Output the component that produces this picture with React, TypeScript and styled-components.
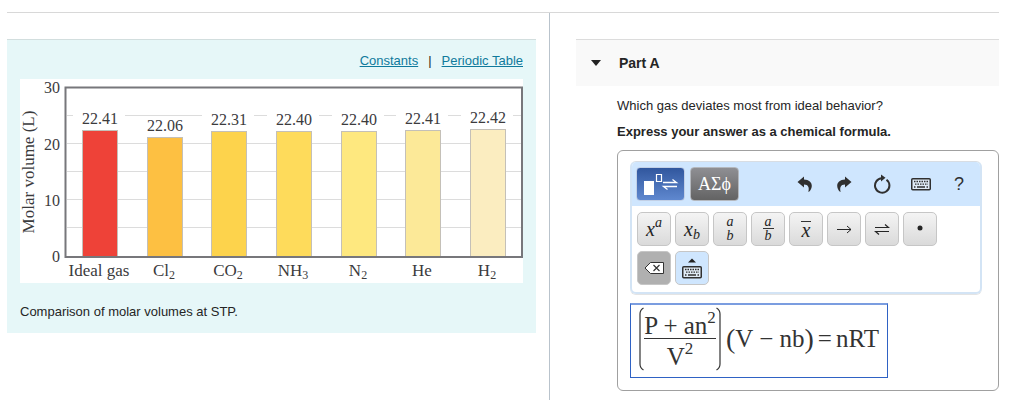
import React from "react";
import styled, { createGlobalStyle, css } from "styled-components";

const serif = `"Liberation Serif", "Times New Roman", serif`;

const GlobalStyle = createGlobalStyle`
  *, *::before, *::after { box-sizing: border-box; }
  body {
    margin: 0;
    background: #fff;
    color: #252525;
    font: 13px/18px "Liberation Sans", Arial, sans-serif;
  }
  p, h2 { margin: 0; }
  button { font: inherit; color: inherit; padding: 0; cursor: pointer; }
  svg { display: block; }
`;

const Page = styled.div`
  min-height: 100vh;
  padding: 12px 25px 0 7px;
  display: flex;
`;

const Columns = styled.main`
  flex: 1;
  border-top: 1px solid #d8d8d8;
  display: grid;
  grid-template-columns: 543fr 449fr;
`;

const ReferenceColumn = styled.section`
  border-right: 1px solid #b9c3cc;
  padding: 26px 13px 0 0;
`;

const QuestionColumn = styled.section`
  padding: 26px 0 8px 26px;
`;

const ReferencePanel = styled.div`
  border-top: 1px solid #d2dede;
  background: #e6f7f8;
  padding: 12px 13px;
`;

const ReferenceLinks = styled.nav`
  display: flex;
  justify-content: flex-end;
  gap: 10px;
  margin-bottom: 9px;
`;

const ReferenceLink = styled.a`
  color: #0f7a9c;
  text-decoration: underline;
`;

const Chart = styled.svg`
  width: 100%;
  height: auto;
  background: #fff;
  font-family: ${serif};
  fill: #3b3b3d;
`;

const Caption = styled.p`
  margin-top: 20px;
`;

const PartHeader = styled.button`
  display: flex;
  align-items: center;
  gap: 18px;
  width: 100%;
  height: 47px;
  padding: 0 15px;
  border: 0;
  border-top: 1px solid #dcdcdc;
  background: #f9f9f9;
  font-size: 14px;
  font-weight: bold;
`;

const PartBody = styled.div`
  padding: 11px 0 0 41px;
`;

const Instruction = styled.p`
  margin: 8px 0 9px;
  font-weight: bold;
`;

const AnswerBox = styled.div`
  border: 1px solid #a0a0a0;
  border-radius: 6px;
  padding: 10px 16px 12px 12px;
`;

const Editor = styled.div`
  border: 2px solid #d3e4f5;
  border-top: 1px solid #d8dde3;
  border-radius: 6px;
  overflow: hidden;
  box-shadow: 0 1px 0 #e4e4e4;
`;

const EditorTop = styled.div`
  display: flex;
  align-items: center;
  justify-content: space-between;
  height: 44px;
  padding: 0 6px 0 4px;
  background: #cfe6fe;
`;

const Tabs = styled.div`
  display: flex;
  gap: 5px;
`;

const Tab = styled.button<{ $active?: boolean }>`
  display: flex;
  align-items: center;
  justify-content: center;
  width: 49px;
  height: 34px;
  border: 1px solid ${(p) => (p.$active ? "#c2d0e6" : "#b4b8be")};
  border-radius: 4px;
  background: ${(p) =>
    p.$active ? "linear-gradient(#31579e, #5f88cf)" : "linear-gradient(#8f8f93, #636363)"};
  && { color: #fff; font: 18px/24px ${serif}; }
`;

const Tools = styled.div`
  display: flex;
  justify-content: space-between;
  width: 184px;
`;

const Tool = styled.button`
  display: flex;
  align-items: center;
  justify-content: center;
  width: 30px;
  height: 32px;
  border: 0;
  background: none;
  && { color: #303030; font-size: 18px; }
`;

const Keys = styled.div`
  display: flex;
  flex-wrap: wrap;
  gap: 5px 4px;
  padding: 6px 36px 7px 5px;
`;

const Key = styled.button<{ $tone?: "dark" | "blue" }>`
  display: flex;
  align-items: center;
  justify-content: center;
  width: 34px;
  height: 34px;
  border: 1px solid #c6c6c6;
  border-radius: 5px;
  background: linear-gradient(#f4f4f4, #dadada);
  ${(p) => p.$tone === "dark" && css`background: #b0b0b0;`}
  ${(p) => p.$tone === "blue" && css`background: #cfe6fe;`}
  && { font: italic 20px/20px ${serif}; }
`;

const Small = styled.span<{ $place: "up" | "down" }>`
  font-size: 14px;
  line-height: 14px;
  align-self: ${(p) => (p.$place === "up" ? "flex-start" : "flex-end")};
  padding: ${(p) => (p.$place === "up" ? "3px 0 0" : "0 0 3px")};
`;

const Stack = styled.span<{ $bar?: boolean }>`
  display: flex;
  flex-direction: column;
  align-items: center;
  width: 11px;
  font-size: 14px;
  line-height: 14px;
  span:first-child {
    width: 100%;
    line-height: 12px;
    border-bottom: 1px solid ${(p) => (p.$bar ? "#333" : "transparent")};
  }
`;

const Overlined = styled.span`
  border-top: 1px solid #333;
  line-height: 16px;
  padding: 0 1px;
`;

const MathField = styled.div`
  display: inline-flex;
  align-items: flex-start;
  margin-top: 9px;
  height: 75px;
  padding: 2px 8px 0 8px;
  border: 1px solid #2f62c4;
  border-top: 2px solid #7b9de0;
  color: #333;
  font: 25px/30px ${serif};
  white-space: nowrap;
  vertical-align: top;
`;

const Fraction = styled.span`
  display: flex;
  flex-direction: column;
  width: 72px;
  text-align: center;
`;

const Numerator = styled.span`
  height: 32px;
  padding-top: 4px;
  border-bottom: 1px solid #333;
`;

const Denominator = styled.span`
  padding: 3px 0 0;
`;

const Power = styled.sup`
  font-size: 17px;
  line-height: 0;
  vertical-align: 11px;
`;

const Expression = styled.span`
  display: flex;
  align-items: center;
  gap: 4px;
  height: 34px;
  margin: 15px 0 0 5px;
`;

const Group = styled.span`
  display: flex;
  align-items: center;
`;

const Paren = styled.span`
  font-size: 28px;
  line-height: 26px;
`;

const bars = [
  { value: "22.41", name: "Ideal gas", sub: "", x: 62, top: 51, fill: "#ee4238" },
  { value: "22.06", name: "Cl", sub: "2", x: 127, top: 58, fill: "#fdc042" },
  { value: "22.31", name: "CO", sub: "2", x: 191, top: 52, fill: "#fdd34c" },
  { value: "22.40", name: "NH", sub: "3", x: 256, top: 52, fill: "#fedb5b" },
  { value: "22.40", name: "N", sub: "2", x: 321, top: 52, fill: "#fee87f" },
  { value: "22.41", name: "He", sub: "", x: 385, top: 51, fill: "#fce998" },
  { value: "22.42", name: "H", sub: "2", x: 450, top: 50, fill: "#fbedc0" },
];

const gridLines = [37, 65, 93, 121, 149];
const ticks = [
  { label: "30", y: 14 },
  { label: "20", y: 71 },
  { label: "10", y: 127 },
  { label: "0", y: 183 },
];

function VolumeChart() {
  return (
    <Chart viewBox="0 0 503 204" role="img" aria-label="Bar chart of molar volumes">
      {gridLines.map((y) => (
        <path key={y} d={`M47 ${y - 0.5}H502`} stroke="#dcdcdc" />
      ))}
      {bars.map((b) => (
        <g key={b.name}>
          {b.top < 55 && <rect x={b.x - 9} y="30" width="52" height="15" fill="#fff" />}
          <rect x={b.x + 0.5} y={b.top + 0.5} width="35" height={177 - b.top} fill={b.fill} stroke="#c4c0b8" />
          <text x={b.x + 18} y={b.top - 6} fontSize="16" textAnchor="middle">
            {b.value}
          </text>
          <text x={b.x + 17} y="197" fontSize="17" textAnchor="middle">
            {b.name}
            {b.sub && (
              <tspan fontSize="12" dy="3">
                {b.sub}
              </tspan>
            )}
          </text>
        </g>
      ))}
      <path d="M45.5 8.5H502V178H45.5Z" fill="none" stroke="#77777b" strokeWidth="2" />
      {ticks.map((t) => (
        <text key={t.label} x="40" y={t.y} fontSize="16" textAnchor="end">
          {t.label}
        </text>
      ))}
      <text transform="translate(14 93) rotate(-90)" fontSize="17" textAnchor="middle">
        Molar volume (L)
      </text>
    </Chart>
  );
}

function Harpoons() {
  return (
    <svg width="16" height="12" viewBox="0 0 16 12" fill="none" stroke="currentColor" strokeWidth="1.2">
      <path d="M1 4.5H14.5L11 1.5M15 8.5H1.5L5 11.5" />
    </svg>
  );
}

function TemplatesIcon() {
  return (
    <svg width="36" height="24" viewBox="0 0 36 24" fill="none" stroke="#fff">
      <path d="M1 9H11V23H1Z" fill="#fff" stroke="none" />
      <path d="M13.5 2.5H18.5V9.5H13.5Z" strokeWidth="1.2" />
      <path d="M20 10.5H33.500L29.5 7.500M34 14.500H20.500L24.5 17.500" strokeWidth="1.3" />
    </svg>
  );
}

function CurvedArrow({ flip }: { flip?: boolean }) {
  return (
    <svg width="16" height="16" viewBox="0 0 16 16" fill="currentColor">
      <path
        transform={flip ? "translate(16 0) scale(-1 1)" : undefined}
        d="M0.500 6L7 0.500V3.500C12 3.500 15 6.500 14.800 10C14.700 12.500 13.500 14.500 12 15.800H11.300C12.500 12 11.500 8.500 7 8.500V11.500Z"
      />
    </svg>
  );
}

function ResetIcon() {
  return (
    <svg width="18" height="20" viewBox="0 0 18 20" fill="none" stroke="currentColor">
      <path d="M13.500 5.700A7.200 7.200 0 1 1 9 4.300" strokeWidth="2" />
      <path d="M8 0.500L12.500 3.800L8 7.500Z" fill="currentColor" stroke="none" />
    </svg>
  );
}

function KeyboardIcon() {
  return (
    <svg width="20" height="14" viewBox="0 0 20 14" fill="none" stroke="currentColor">
      <rect x="0.75" y="1.75" width="18.5" height="11" rx="1" fill="#dfeaf5" strokeWidth="1.5" />
      <path d="M3 4.5H17" strokeWidth="1.3" strokeDasharray="1.5 1" />
      <path d="M4 7.2H17" strokeWidth="1.3" strokeDasharray="1.5 1" />
      <path d="M3 10H4.500M6 10H14M15.500 10H17" strokeWidth="1.3" />
    </svg>
  );
}

function PanelKeyboardIcon() {
  return (
    <svg width="20" height="21" viewBox="0 0 20 21" fill="none" stroke="#303030">
      <path d="M6 4.500L10 0.500L14 4.500Z" fill="#222" stroke="none" />
      <rect x="0.75" y="8.75" width="18.5" height="11" rx="1" fill="#dfeaf5" strokeWidth="1.5" />
      <path d="M3 11.500H17M4 14.200H17" strokeWidth="1.3" strokeDasharray="1.5 1" />
      <path d="M3 17H4.500M6 17H14M15.500 17H17" strokeWidth="1.3" />
    </svg>
  );
}

function BackspaceIcon() {
  return (
    <svg width="20" height="12" viewBox="0 0 20 12" fill="none" stroke="#333">
      <path d="M6.500 0.500H19.500V11.500H6.500L1 6Z" fill="#fff" />
      <path d="M9.500 3L15.500 9M15.500 3L9.500 9" strokeWidth="1.2" />
    </svg>
  );
}

function TallParen({ close }: { close?: boolean }) {
  return (
    <svg width="5" height="64" viewBox="0 0 5 64" fill="none" stroke="#333" strokeWidth="1.2">
      <path d={close ? "M0.500 1Q4 3 4 7V57Q4 61 0.500 63" : "M4.500 1Q1 3 1 7V57Q1 61 4.500 63"} />
    </svg>
  );
}

export default function App() {
  return (
    <Page>
      <GlobalStyle />
      <Columns>
        <ReferenceColumn>
          <ReferencePanel>
            <ReferenceLinks>
              <ReferenceLink href="#constants">Constants</ReferenceLink>
              <span>|</span>
              <ReferenceLink href="#periodic-table">Periodic Table</ReferenceLink>
            </ReferenceLinks>
            <VolumeChart />
            <Caption>Comparison of molar volumes at STP.</Caption>
          </ReferencePanel>
        </ReferenceColumn>
        <QuestionColumn>
          <PartHeader type="button" aria-expanded="true">
            <svg width="10" height="6" viewBox="0 0 10 6" fill="#222">
              <path d="M0 0H10L5 6Z" />
            </svg>
            Part A
          </PartHeader>
          <PartBody>
            <p>Which gas deviates most from ideal behavior?</p>
            <Instruction>Express your answer as a chemical formula.</Instruction>
            <AnswerBox>
              <Editor>
                <EditorTop>
                  <Tabs>
                    <Tab type="button" $active aria-label="Templates">
                      <TemplatesIcon />
                    </Tab>
                    <Tab type="button">ΑΣϕ</Tab>
                  </Tabs>
                  <Tools>
                    <Tool type="button" aria-label="Undo"><CurvedArrow /></Tool>
                    <Tool type="button" aria-label="Redo"><CurvedArrow flip /></Tool>
                    <Tool type="button" aria-label="Reset"><ResetIcon /></Tool>
                    <Tool type="button" aria-label="Keyboard shortcuts"><KeyboardIcon /></Tool>
                    <Tool type="button">?</Tool>
                  </Tools>
                </EditorTop>
                <Keys>
                  <Key type="button">x<Small $place="up">a</Small></Key>
                  <Key type="button">x<Small $place="down">b</Small></Key>
                  <Key type="button"><Stack><span>a</span><span>b</span></Stack></Key>
                  <Key type="button"><Stack $bar><span>a</span><span>b</span></Stack></Key>
                  <Key type="button"><Overlined>x</Overlined></Key>
                  <Key type="button" aria-label="Yields">
                    <svg width="16" height="10" viewBox="0 0 16 10" fill="none" stroke="currentColor">
                      <path d="M1 5.500H15M11 2L15 5.500L11 9" />
                    </svg>
                  </Key>
                  <Key type="button" aria-label="Equilibrium"><Harpoons /></Key>
                  <Key type="button" aria-label="Dot">
                    <svg width="6" height="8" viewBox="0 0 6 8" fill="currentColor">
                      <circle cx="3" cy="3" r="2.5" />
                    </svg>
                  </Key>
                  <Key type="button" $tone="dark" aria-label="Delete"><BackspaceIcon /></Key>
                  <Key type="button" $tone="blue" aria-label="Keyboard"><PanelKeyboardIcon /></Key>
                </Keys>
              </Editor>
              <MathField role="textbox" tabIndex={0} aria-label="Answer">
                <TallParen />
                <Fraction>
                  <Numerator>P + an<Power>2</Power></Numerator>
                  <Denominator>V<Power>2</Power></Denominator>
                </Fraction>
                <TallParen close />
                <Expression>
                  <Group><Paren>(</Paren>V − nb<Paren>)</Paren></Group>
                  <span>=</span>
                  <span>nRT</span>
                </Expression>
              </MathField>
            </AnswerBox>
          </PartBody>
        </QuestionColumn>
      </Columns>
    </Page>
  );
}
